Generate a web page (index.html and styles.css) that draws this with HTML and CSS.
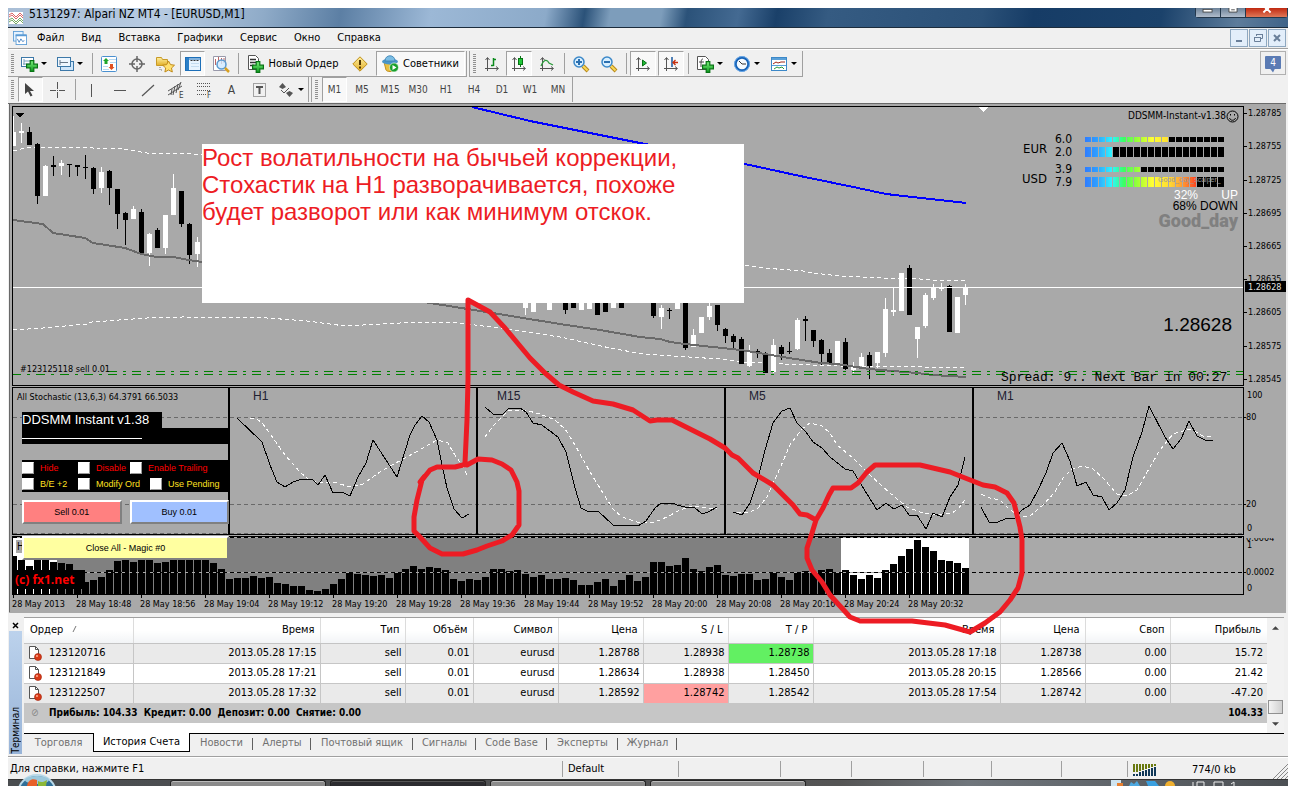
FILE: index.html
```html
<!DOCTYPE html>
<html lang="ru">
<head>
<meta charset="utf-8">
<title>5131297: Alpari NZ MT4 - [EURUSD,M1]</title>
<link rel="stylesheet" href="styles.css">
</head>
<body>
<svg class="defs" aria-hidden="true">
  <defs>
    <linearGradient id="gold" x1="0" y1="0" x2="0" y2="1"><stop offset="0" stop-color="#fff0a0"/><stop offset="1" stop-color="#e2ae28"/></linearGradient>
    <linearGradient id="green" x1="0" y1="0" x2="0" y2="1"><stop offset="0" stop-color="#7cf07c"/><stop offset="1" stop-color="#0b9a1c"/></linearGradient>
    <linearGradient id="heat" gradientUnits="userSpaceOnUse" x1="1085" y1="0" x2="1197" y2="0">
      <stop offset="0" stop-color="#2f7dff"/><stop offset=".1" stop-color="#2f9cff"/><stop offset=".24" stop-color="#2ff5ff"/><stop offset=".35" stop-color="#3cff60"/><stop offset=".48" stop-color="#a4ff33"/><stop offset=".6" stop-color="#ffff33"/><stop offset=".75" stop-color="#ffdd33"/><stop offset=".87" stop-color="#ff9a33"/><stop offset="1" stop-color="#ff4020"/>
    </linearGradient>
    <clipPath id="inside"><rect x="13" y="107" width="1230" height="488"/></clipPath>
    <symbol id="plus" viewBox="0 0 10 10"><path d="M3.5.5h3v3h3v3h-3v3h-3v-3h-3v-3h3z" fill="url(#green)" stroke="#087314"/></symbol>
    <symbol id="axes" viewBox="0 0 16 16"><path d="M3.500 15V2M1.500 4l2-2.500 2 2.500M1 12.500h13M12 10.500l2.500 2-2.500 2" fill="none" stroke="#555"/></symbol>
    <symbol id="doc" viewBox="0 0 16 16"><path d="M2.500 1.500h6l3 3v9h-9z" fill="#fff" stroke="#555"/><path d="M8.500 1.500v3h3" fill="none" stroke="#555"/><circle cx="11" cy="12" r="3.500" fill="#d83a18" stroke="#a02008" stroke-width=".6"/><circle cx="10" cy="11" r="1" fill="#ffb090"/></symbol>
  </defs>
</svg>

<div class="app">
  <header class="titlebar">
    <svg class="app-icon" viewBox="0 0 14 12"><rect width="14" height="12" fill="#fff"/><path d="M0 3l3-2 4 4 4-4 3 3M0 5l3-2 4 4 4-4 3 3" fill="none" stroke="#d66"/><path d="M0 8l3-2 4 4 4-4 3 3M0 10l3-2 4 4 4-4 3 3" fill="none" stroke="#7a6"/></svg>
    <h1>5131297: Alpari NZ MT4 - [EURUSD,M1]</h1>
    <div class="window-buttons">
      <button aria-label="Свернуть"><svg viewBox="0 0 14 10"><rect x="1.500" y="1.500" width="10" height="3" fill="#fff" stroke="#444"/></svg></button>
      <button aria-label="Развернуть"><svg viewBox="0 0 14 10"><path d="M2.500 0v4.500h9V0" fill="#fff" stroke="#444"/><path d="M5 2h4" stroke="#444"/></svg></button>
      <button class="close" aria-label="Закрыть"><svg viewBox="0 0 14 10"><path d="M3 5l4-4 4 4M5 0l2 2 2-2" fill="none" stroke="#fff" stroke-width="2"/></svg></button>
    </div>
  </header>

  <nav class="menubar">
    <svg class="menu-icon" viewBox="0 0 16 16"><rect x=".5" y=".5" width="11" height="11" fill="#e4f2ff" stroke="#5b9bd5"/><rect x="3.500" y="4.500" width="12" height="11" fill="#fff" stroke="#5b9bd5"/><path d="M3 5h12" stroke="#5b9bd5" stroke-width="2"/><path d="M5 9l2 4 2-4 2 3 2-1" fill="none" stroke="#3a7ac0"/></svg>
    <button>Файл</button><button>Вид</button><button>Вставка</button><button>Графики</button><button>Сервис</button><button>Окно</button><button>Справка</button>
    <div class="mdi">
      <button aria-label="Свернуть окно"><svg viewBox="0 0 16 16"><path d="M5 11h6" stroke="#6a7f99" stroke-width="2"/></svg></button>
      <button aria-label="Восстановить окно"><svg viewBox="0 0 16 16"><path d="M6.500 6V4.500h6v4H11M4.500 7.500h6v4h-6zM6 4.500h7M4 7.500h7" fill="none" stroke="#6a7f99"/></svg></button>
      <button aria-label="Закрыть окно"><svg viewBox="0 0 16 16"><path d="M5 5l6 6M11 5l-6 6" stroke="#6a7f99" stroke-width="2"/></svg></button>
    </div>
  </nav>

  <div class="toolbars">
    <div class="toolbar-row first">
      <div class="toolbar standard">
        <i class="grip"></i>
        <button class="drop" aria-label="Новый график"><svg viewBox="0 0 16 16"><rect x=".5" y="1.500" width="12" height="9" fill="#fff" stroke="#3c78a8"/><path d="M3 3v6M2 8h8M3 5h8" stroke="#78a0c0"/><use href="#plus" x="5" y="4" width="12" height="12"/></svg></button>
        <button class="drop" aria-label="Профили"><svg viewBox="0 0 16 16"><rect x="3.500" y="5.500" width="13" height="9" fill="#cfe6fa" stroke="#3c78a8"/><rect x=".5" y="1.500" width="13" height="9" fill="#eef7ff" stroke="#3c78a8"/><path d="M3 4v5M3 6.500h8" stroke="#678"/></svg></button>
        <i class="sep"></i>
        <button aria-label="Обзор рынка"><svg viewBox="0 0 16 16"><rect x=".5" y=".5" width="15" height="15" rx="1" fill="#fff" stroke="#4a90d0"/><path d="M8 3.500h7M9 6.500h6M2 10.500h5M2 13.500h6" stroke="#b8d8f0"/><path d="M5 2l3 3H6.500v3h-3V5H2z" fill="#1fa52c"/><path d="M10.500 14l3-3H12V8H9v3H7.500z" fill="#e05020"/></svg></button>
        <button aria-label="Окно данных"><svg viewBox="0 0 16 16"><circle cx="8" cy="8" r="5" fill="none" stroke="#666" stroke-width="1.500"/><path d="M8 0v6M8 10v6M0 8h6M10 8h6" stroke="#666" stroke-width="1.500"/></svg></button>
        <button aria-label="Навигатор"><svg viewBox="0 0 16 16"><path d="M-.5 1.500h5l1 2h5v6h-11z" fill="url(#gold)" stroke="#c89a28"/><path d="M3 11v3h3" stroke="#777" fill="none" stroke-dasharray="1 1"/><path d="M11.500 5l2 3.600 4 .6-3 2.800.8 4-3.800-2-3.600 2 .8-4-3-2.800 4-.6z" fill="#ffe070" stroke="#c08a18"/></svg></button>
        <button class="on" aria-label="Терминал"><svg viewBox="0 0 16 16"><rect x=".5" y="1.500" width="15" height="13" fill="#e8f4ff" stroke="#1d6fb8"/><path d="M1 3h14" stroke="#1d6fb8"/><rect x="1" y="2" width="3" height="12" fill="#2c80c8"/><path d="M5.500 4.500h9" stroke="#333" stroke-dasharray="2 1"/><path d="M6 7.500h8M6 10.500h8" stroke="#c4dcf0"/></svg></button>
        <button aria-label="Тестер стратегий"><svg viewBox="0 0 16 16"><path d="M.5.500h12v14H.5z" fill="#fff" stroke="#99a"/><path d="M2.500 3v6M5.500 1v5M8.500 2v6M11 2v5" stroke="#b66"/><circle cx="8.500" cy="8.500" r="4.500" fill="#cfe9ff" fill-opacity=".8" stroke="#5a9ad0" stroke-width="1.500"/><path d="M12 12l4 4" stroke="#d8a020" stroke-width="2.500"/></svg></button>
        <i class="sep"></i>
        <button class="wide"><svg viewBox="0 0 17 18"><path d="M1.500.5h7l3 3v11h-10z" fill="#fff" stroke="#555"/><path d="M3 4.500h6M3 7.500h6M3 10.500h4" stroke="#333" stroke-width="1.500"/><use href="#plus" x="5" y="6" width="12" height="12"/></svg>Новый Ордер</button>
        <button aria-label="MetaEditor"><svg viewBox="0 0 16 16"><path d="M8 .8L15.200 8 8 15.200.8 8z" fill="url(#gold)" stroke="#c0901a"/><path d="M8 4v5M8 10.500v2" stroke="#543800" stroke-width="2"/></svg></button>
        <button class="wide on"><svg viewBox="0 0 17 18"><path d="M2 7l2 8c1 2 7 2 8 0l2-8z" fill="#eac040" stroke="#c09020"/><ellipse cx="8" cy="6.500" rx="8" ry="3" fill="#4b96c8"/><path d="M3 6c0-7 10-7 10 0z" fill="#7bbde4" stroke="#3a80b0" stroke-width=".8"/><circle cx="12" cy="12.500" r="4.500" fill="#19a02c" stroke="#fff" stroke-width=".6"/><path d="M10.500 10v5l4-2.500z" fill="#fff"/></svg>Советники</button>
      </div>
      <div class="toolbar charts">
        <i class="grip"></i>
        <button aria-label="Бары"><svg viewBox="0 0 16 16"><use href="#axes"/><path d="M9.500 2v8M7 9.500h2.500M9.500 3.500H12" stroke="#0b8a1c" stroke-width="1.500"/></svg></button>
        <button class="on" aria-label="Свечи"><svg viewBox="0 0 16 16"><use href="#axes"/><path d="M9.500 0v11" stroke="#087314"/><rect x="7.500" y="2.500" width="4" height="6" fill="#20c838" stroke="#087314"/></svg></button>
        <button aria-label="Линия"><svg viewBox="0 0 16 16"><use href="#axes"/><path d="M2 10c3-7 6-7 8-3l4 2" fill="none" stroke="#2a9a3a" stroke-width="1.300"/></svg></button>
        <i class="sep"></i>
        <button aria-label="Увеличить"><svg viewBox="0 0 16 16"><path d="M10 10l5 5" stroke="#b88818" stroke-width="4"/><path d="M10 10l4.500 4.500" stroke="#f8d858" stroke-width="2"/><circle cx="6" cy="6" r="5" fill="#d8efff" stroke="#3c88c8" stroke-width="1.500"/><path d="M6 3v6M3 6h6" stroke="#2c70b0" stroke-width="2"/></svg></button>
        <button aria-label="Уменьшить"><svg viewBox="0 0 16 16"><path d="M10 10l5 5" stroke="#b88818" stroke-width="4"/><path d="M10 10l4.500 4.500" stroke="#f8d858" stroke-width="2"/><circle cx="6" cy="6" r="5" fill="#d8efff" stroke="#3c88c8" stroke-width="1.500"/><path d="M3 6h6" stroke="#2c70b0" stroke-width="2"/></svg></button>
        <i class="sep"></i>
        <button class="on" aria-label="Автопрокрутка"><svg viewBox="0 0 16 16"><use href="#axes"/><path d="M7.500 4v6l4-3z" fill="#20b838" stroke="#087314"/></svg></button>
        <button class="on" aria-label="Сдвиг графика"><svg viewBox="0 0 16 16"><use href="#axes"/><path d="M9 1v10" stroke="#1858a0" stroke-width="1.500"/><path d="M10 6.500h5M12.500 4l-2.500 2.500 2.500 2.500" fill="none" stroke="#c83010" stroke-width="1.300"/></svg></button>
        <i class="sep"></i>
        <button class="drop" aria-label="Индикаторы"><svg viewBox="0 0 16 16"><path d="M.5.500h8l3 3v10H.5z" fill="#fff" stroke="#555"/><path d="M6 3c-2 0-2 2-2 8M2 6h5M5 11h3" stroke="#444" fill="none"/><use href="#plus" x="5" y="5" width="12" height="12"/></svg></button>
        <button class="drop" aria-label="Периоды"><svg viewBox="0 0 16 16"><circle cx="8" cy="8" r="6.500" fill="#f4faff" stroke="#1763b8" stroke-width="2.500"/><circle cx="8" cy="8" r="7.500" fill="none" stroke="#68a8e8"/><path d="M8 8L5 5M8 8h4" stroke="#333"/></svg></button>
        <button class="drop" aria-label="Шаблоны"><svg viewBox="0 0 16 16"><rect x=".5" y="1.500" width="15" height="13" fill="#fff" stroke="#3c88c8"/><path d="M1 3h14" stroke="#5aa0d8" stroke-width="2"/><path d="M2 8l3-2 2 1 3-1h4" fill="none" stroke="#a02818"/><path d="M1 9.500h14" stroke="#5aa0d8"/><path d="M3 13l3-2 2 1 3-1 2 2" fill="none" stroke="#2a9a3a"/></svg></button>
      </div>
      <button class="news" aria-label="Сообщения"><span>4</span></button>
    </div>

    <div class="toolbar-row">
      <div class="toolbar drawing">
        <i class="grip"></i>
        <button class="on" aria-label="Курсор"><svg viewBox="0 0 16 16"><path d="M2 1v11l3-2.500 2.500 5 2-1L7 9h4z" fill="#444"/></svg></button>
        <button aria-label="Перекрестие"><svg viewBox="0 0 16 16"><path d="M7.500 0v7M7.500 10v6M0 8.500h6M9 8.500h6M7 8.500h1" stroke="#555"/></svg></button>
        <i class="sep"></i>
        <button aria-label="Вертикальная линия"><svg viewBox="0 0 16 16"><path d="M7.500 2v13" stroke="#555"/></svg></button>
        <button aria-label="Горизонтальная линия"><svg viewBox="0 0 16 16"><path d="M2 8.500h12" stroke="#555"/></svg></button>
        <button aria-label="Трендовая линия"><svg viewBox="0 0 16 16"><path d="M2 14L14 3" stroke="#555" stroke-width="1.200"/></svg></button>
        <button aria-label="Канал"><svg viewBox="0 0 16 16"><path d="M0 13L14 4M0 9L13 1M4 7l-1 6M7 4L5 13M10 2L8 11M13 0l-3 8" stroke="#555" fill="none"/><text x="11" y="16">E</text></svg></button>
        <button aria-label="Фибоначчи"><svg viewBox="0 0 16 16"><path d="M1 1.500h14M1 4.500h14M1 8.500h14M1 12.500h9" stroke="#555" stroke-dasharray="1 1"/><text x="11" y="16">F</text></svg></button>
        <button class="glyph">A</button>
        <button aria-label="Метка"><svg viewBox="0 0 16 16"><rect x="1.500" y="1.500" width="12" height="13" fill="none" stroke="#555" stroke-dasharray="1 1"/><path d="M4 5h7M7.500 5v7" stroke="#555" stroke-width="2"/></svg></button>
        <button class="drop" aria-label="Стрелки"><svg viewBox="0 0 16 16"><path d="M4.500 1L8 5l-3.500 2L1 5zM11.500 9L15 11l-3.500 4L8 11z" fill="#555"/><path d="M3 8l3 3 5-5" fill="none" stroke="#555"/></svg></button>
      </div>
      <div class="toolbar periods">
        <i class="grip"></i>
        <button class="on">M1</button><button>M5</button><button>M15</button><button>M30</button><button>H1</button><button>H4</button><button>D1</button><button>W1</button><button>MN</button>
      </div>
    </div>
  </div>

  <main class="chart">
    <svg class="plot" viewBox="8 102 1280 511" role="img" aria-label="EURUSD,M1">
      <rect x="8" y="102" width="1280" height="511" fill="#f0f0f0"/>
      <rect x="9" y="103" width="1277" height="510" fill="#a9a9a9"/>
      <path d="M8 103.500h1278M9.500 103v509" stroke="#696969" fill="none"/>

      <g class="crisp">
        <path d="M472 107L530 121 600 135 650 145 745 164 800 176 858 188 886 194 966 203" stroke="#00f" stroke-width="2"/>
        <path class="dash" d="M13 151L25 148 66 147 88 147 93 148 123 149 147 153 183 153 202 155M745 265L763 268 803 271 813 273 840 276 883 278 907 278 933 280 966 280"/>
        <path class="dash" d="M13 330L43 328 87 324 92 322 147 318 183 317 267 318 307 321 345 326 400 323 450 322 500 328 560 337 610 348 643 354 673 356 720 359 743 362 783 364 837 366 923 367 950 367 966 368"/>
        <g clip-path="url(#inside)">
        <path class="candle-w" d="M13.500 132V146M21.500 131V133M45.500 166V196M61.500 163V166M101.500 172V188M133.500 209V219M149.500 234V253M165.500 215V248M173.500 188V215M197.500 242V254M525.500 303V308M533.500 303V312M549.500 303V310M581.500 303V310M589.500 303V309M613.500 303V308M661.500 308V317M677.500 300V309M693.500 335V347M701.500 317V333M709.500 306V317M749.500 352V366M773.500 345V372M797.500 320V349M837.500 341V364M853.500 366V370M861.500 357V366M877.500 352V363M885.500 309V353M893.500 310V312M901.500 273V311M917.500 327V339M925.500 295V326M933.500 287V298M941.500 288V289M957.500 297V333M965.500 287V295"/>
        <path class="wick-w" d="M13.500 116V132M21.500 123V143M45.500 165V196M61.500 160V175M101.500 167V193M133.500 206V219M149.500 233V266M165.500 215V254M173.500 174V215M197.500 237V267M525.500 303V315M661.500 305V329M693.500 329V347M709.500 303V320M749.500 345V367M773.500 339V373M797.500 318V350M853.500 362V373M861.500 353V366M877.500 352V368M885.500 298V357M893.500 288V316M917.500 327V358M925.500 293V328M933.500 284V300M941.500 283V291M965.500 284V305"/>
        <path class="candle-b" d="M29.500 132V145M37.500 144V196M53.500 165V167M69.500 164V165M77.500 165V167M85.500 167V168M93.500 168V189M109.500 171V188M117.500 189V214M125.500 213V220M141.500 212V253M157.500 230V248M181.500 191V224M189.500 224V255M565.500 303V310M573.500 303V308M597.500 303V315M605.500 303V312M621.500 303V308M653.500 303V316M669.500 310V311M685.500 303V348M717.500 305V325M725.500 329V336M733.500 336V342M741.500 339V364M757.500 351V352M765.500 353V373M781.500 347V354M789.500 351V352M805.500 319V321M813.500 330V341M821.500 340V354M829.500 353V363M845.500 342V369M869.500 355V366M909.500 268V315M949.500 286V332"/>
        <path class="wick-b" d="M29.500 127V145M37.500 143V204M53.500 156V176M69.500 164V177M77.500 165V176M85.500 155V179M93.500 167V194M109.500 170V205M117.500 189V229M125.500 212V245M141.500 209V253M157.500 228V248M181.500 191V227M189.500 223V264M565.500 303V314M653.500 303V318M669.500 308V319M685.500 303V350M717.500 305V331M725.500 328V343M733.500 334V348M741.500 337V364M757.500 349V358M765.500 352V373M781.500 345V360M789.500 342V354M805.500 316V341M813.500 330V347M821.500 339V365M829.500 349V364M845.500 338V370M869.500 352V379M909.500 265V315M949.500 285V332"/>
        </g>
        <path class="ma" d="M13 220L43 224 53 233 85 238 93 243 125 248 141 254 157 257 173 257 189 260 202 262 430 303 480 311 560 324 600 330 640 337 660 339 670 342 685 344 741 350 765 354 789 358 821 363 837 364 869 369 893 371 917 373 933 375 966 377"/>
        <path d="M13 287.500H1243" stroke="#fff"/>
        <path d="M108 371.500H1243M12 374.500H1243" stroke="#008000" stroke-dasharray="9 6 3 6"/>
        <path d="M12.500 106.500H1243.500V385.500H12.500zM12.500 387.500H1243.500V534.500H12.500z" stroke="#000"/>
        <path d="M15 113h9l-4 4z" fill="#000"/><path d="M979 107h9l-4.500 5z" fill="#fff"/>
        <path d="M1244 113.500h3M1244 146.500h3M1244 180.500h3M1244 213.500h3M1244 246.500h3M1244 279.500h3M1244 312.500h3M1244 346.500h3M1244 379.500h3" stroke="#000"/>
        <path class="level" d="M13 417.500H1243M13 504.500H1243M13 533.500H1243"/>
        <path d="M229 388V534M477 388V534M725 388V534M973 388V534" stroke="#000" stroke-width="2"/>
        <path class="dash" d="M250 418L257 419 263 424 273 438 285 455 300 472 308 479 317 482 337 483 350 487 363 484 380 472 392 465 407 457 423 448 437 440 448 443 453 452 462 465 468 477M485 437L493 426 502 417 508 411 525 410 540 414 555 420 565 429 575 445 590 472 603 493 613 509 622 517 637 522 648 523 655 522 667 517 680 510 692 506 707 508 717 509M737 513L750 512 758 508 767 497 777 475 790 445 802 429 810 423 822 426 830 433 837 445 853 458 870 475 890 493 907 507 923 513 940 515 952 513 958 509 965 500M981 494L990 498 1000 500 1010 510 1022 517 1030 516 1043 505 1055 492 1063 478 1072 469 1083 466 1093 469 1103 478 1117 494 1127 496 1137 490 1150 467 1160 450 1173 434 1190 429 1203 436 1213 437"/>
        <path class="main" d="M237 418L262 442 270 465 277 482 285 487 293 482 302 479 312 479 318 485 325 475 333 493 342 492 350 496 358 477 366 463 373 440 397 477 410 435 415 425 422 416 429 422 437 440 442 465 447 488 454 509 462 518 469 514M485 407L493 414 502 415 509 408 520 408 526 412 533 423 542 425 550 431 558 437 566 452 575 488 581 508 589 512 598 511 613 525 638 526 646 521 655 508 661 503 673 503 677 505 685 507 694 507 702 514 708 512 717 507M733 512L742 515 750 503 757 482 765 450 773 423 782 411 790 408 797 423 806 432 813 442 822 448 830 457 845 469 853 471 862 486 877 510 886 503 894 509 902 505 909 515 917 515 926 529 933 513 942 517 950 497 958 485 965 457M981 507L989 522 998 522 1005 519 1015 518 1022 510 1030 505 1038 490 1046 473 1053 453 1062 443 1070 461 1077 486 1086 482 1093 495 1102 497 1109 510 1117 503 1125 490 1133 457 1142 432 1149 406 1165 437 1173 449 1181 439 1189 421 1197 436 1205 440 1213 440"/>
        <path d="M13 537H841V594H13z" fill="#808080"/><path d="M13 537H57V594H13zM841 537H969V594H841z" fill="#fff"/>
        <g clip-path="url(#inside)">
        <path class="bars" d="M13.500 594V556M21.500 594V560M29.500 594V566M37.500 594V560M45.500 594V560M53.500 594V562M61.500 594V563M69.500 594V564M77.500 594V570M85.500 594V582M93.500 594V580M101.500 594V577M109.500 594V570M117.500 594V561M125.500 594V560M133.500 594V562M141.500 594V560M149.500 594V560M157.500 594V563M165.500 594V562M173.500 594V560M181.500 594V560M189.500 594V560M197.500 594V560M205.500 594V560M213.500 594V563M221.500 594V569M229.500 594V579M237.500 594V578M245.500 594V578M253.500 594V576M261.500 594V578M269.500 594V577M277.500 594V583M285.500 594V584M293.500 594V586M301.500 594V586M309.500 594V590M317.500 594V591M325.500 594V589M333.500 594V584M341.500 594V579M349.500 594V573M357.500 594V574M365.500 594V575M373.500 594V576M381.500 594V575M389.500 594V578M397.500 594V573M405.500 594V569M413.500 594V566M421.500 594V569M429.500 594V567M437.500 594V568M445.500 594V570M453.500 594V579M461.500 594V581M469.500 594V579M477.500 594V580M485.500 594V577M493.500 594V569M501.500 594V569M509.500 594V571M517.500 594V570M525.500 594V574M533.500 594V577M541.500 594V575M549.500 594V579M557.500 594V579M565.500 594V578M573.500 594V580M581.500 594V585M589.500 594V585M597.500 594V582M605.500 594V579M613.500 594V586M621.500 594V580M629.500 594V575M637.500 594V581M645.500 594V577M653.500 594V562M661.500 594V562M669.500 594V566M677.500 594V565M685.500 594V558M693.500 594V569M701.500 594V571M709.500 594V567M717.500 594V565M725.500 594V575M733.500 594V576M741.500 594V574M749.500 594V574M757.500 594V580M765.500 594V579M773.500 594V573M781.500 594V577M789.500 594V580M797.500 594V573M805.500 594V571M813.500 594V572M821.500 594V570M829.500 594V569M837.500 594V573M845.500 594V570M853.500 594V575M861.500 594V579M869.500 594V575M877.500 594V578M885.500 594V570M893.500 594V564M901.500 594V556M909.500 594V549M917.500 594V540M925.500 594V547M933.500 594V551M941.500 594V560M949.500 594V561M957.500 594V563M965.500 594V568"/>
        </g>
        <path d="M13 572.500H1243M13 537.500H1243" stroke="#a9a9a9"/>
        <path d="M13 572.500H1243M13 537.500H1243" stroke="#000" stroke-dasharray="4 3"/>
        <path d="M12.500 536.500H1243.500V594.500H12.500z" stroke="#000"/>
        <path d="M13.500 595v3M77.500 595v3M141.500 595v3M205.500 595v3M269.500 595v3M333.500 595v3M397.500 595v3M461.500 595v3M525.500 595v3M589.500 595v3M653.500 595v3M717.500 595v3M781.500 595v3M845.500 595v3M909.500 595v3M1244 417.500h2M1244 504.500h2M1244 572.500h2" stroke="#000"/>
        <g stroke="#000" stroke-dasharray="6 1">
          <path d="M1085 139.500H1225M1085 169.500H1225" stroke-width="5"/><path d="M1085 152H1225M1085 182H1225" stroke-width="10"/>
        </g>
        <g stroke="url(#heat)" stroke-dasharray="6 1">
          <path d="M1085 139.500H1169M1085 169.500H1141" stroke-width="5"/><path d="M1085 152H1113M1085 182H1197" stroke-width="10"/>
        </g>
      </g>

      <g class="axis">
        <text x="1248" y="116">1.28785</text><text x="1248" y="149">1.28755</text><text x="1248" y="183">1.28725</text><text x="1248" y="216">1.28695</text><text x="1248" y="249">1.28665</text><text x="1248" y="282">1.28635</text>
        <rect x="1245" y="281" width="41" height="11"/>
        <text class="now" x="1248" y="290">1.28628</text><text x="1248" y="315">1.28605</text><text x="1248" y="349">1.28575</text><text x="1248" y="382">1.28545</text>
        <text x="1247" y="398">100</text><text x="1246" y="420">80</text><text x="1246" y="507">20</text><text x="1247" y="531">0</text><text x="1247" y="548">1</text><text x="1246" y="541" clip-path="inset(5px 0 0 0)">0.0004</text><text x="1246" y="575">0.0002</text><text x="1247" y="591">0</text>
        <text x="12" y="607">28 May 2013</text><text x="76" y="607">28 May 18:48</text><text x="140" y="607">28 May 18:56</text><text x="204" y="607">28 May 19:04</text><text x="268" y="607">28 May 19:12</text><text x="332" y="607">28 May 19:20</text><text x="396" y="607">28 May 19:28</text><text x="460" y="607">28 May 19:36</text><text x="524" y="607">28 May 19:44</text><text x="588" y="607">28 May 19:52</text><text x="652" y="607">28 May 20:00</text><text x="716" y="607">28 May 20:08</text><text x="780" y="607">28 May 20:16</text><text x="844" y="607">28 May 20:24</text><text x="908" y="607">28 May 20:32</text>
        <text x="17" y="400">All Stochastic (13,6,3) 64.3791 66.5033</text>
        <text x="20" y="372">#123125118 sell 0.01</text>
      </g>
      <text class="expert" x="1226" y="119" text-anchor="end">DDSMM-Instant-v1.38</text>
      <g fill="none" stroke="#000"><circle cx="1232.500" cy="116.500" r="5.500"/><path d="M1229.500 118c1 3 5 3 6 0M1230.500 114v1.500M1234.500 114v1.500"/></g>
      <g class="meter"><text x="1023" y="153">EUR</text><text x="1022" y="183">USD</text></g>
      <g class="meter-num"><text x="1055" y="143">6.0</text><text x="1055" y="156">2.0</text><text x="1055" y="173">3.9</text><text x="1055" y="186">7.9</text></g>
      <text class="tiny" x="1158" y="182">Good_day_scalper_</text>
      <g class="votes"><text x="1174" y="199" fill="#fff">32%</text><text x="1238" y="199" fill="#fff" text-anchor="end">UP</text><text x="1238" y="210" text-anchor="end">68% DOWN</text></g>
      <text class="brand" x="1238" y="227" text-anchor="end">Good_day</text>
      <text class="quote" x="1232" y="331" text-anchor="end">1.28628</text>
      <text class="spread" x="1001" y="381">Spread: 9.. Next Bar in 00:27</text>
      <g class="frames"><text x="253" y="400">H1</text><text x="497" y="400">M15</text><text x="749" y="400">M5</text><text x="997" y="400">M1</text></g>
    </svg>

    <section class="expert-panel">
      <h2>DDSMM Instant v1.38</h2>
      <div class="rule"></div>
      <div class="options">
        <div class="hot"><label class="a"><input type="checkbox">Hide</label><label class="b"><input type="checkbox">Disable</label><label><input type="checkbox">Enable Trailing</label></div>
        <div class="warm"><label class="a"><input type="checkbox">B/E +2</label><label class="c"><input type="checkbox">Modify Ord</label><label><input type="checkbox">Use Pending</label></div>
      </div>
      <div class="trade"><button class="sell">Sell 0.01</button><button class="buy">Buy 0.01</button></div>
      <button class="close-all">Close All - Magic #0</button>
    </section>
    <span class="hist-tag">H</span>
    <span class="copyright">(c) fx1.net</span>
    <p class="note">Рост волатильности на бычьей коррекции,<br>Стохастик на H1 разворачивается, похоже<br>будет разворот или как минимум отскок.</p>
  </main>

  <section class="terminal">
    <aside class="side"><button aria-label="Закрыть"><svg viewBox="0 0 7 7"><path d="M1 1l5 5M6 1L1 6" stroke="#000" stroke-width="1.500"/></svg></button><div class="caption"><span>Терминал</span></div></aside>
    <div class="pane">
      <div class="grid-wrap">
        <table>
          <colgroup><col class="w-order"><col class="w-time"><col class="w-std"><col class="w-vol"><col class="w-std"><col class="w-std"><col class="w-std"><col class="w-std"><col class="w-time"><col class="w-std"><col class="w-std"><col class="w-last"></colgroup>
          <thead><tr><th>Ордер <svg class="sort" viewBox="0 0 6 8"><path d="M1 7l3-6" stroke="#777"/></svg></th><th>Время</th><th>Тип</th><th>Объём</th><th>Символ</th><th>Цена</th><th>S / L</th><th>T / P</th><th>Время</th><th>Цена</th><th>Своп</th><th>Прибыль</th></tr></thead>
          <tbody>
            <tr><td><svg><use href="#doc"/></svg>123120716</td><td>2013.05.28 17:15</td><td>sell</td><td>0.01</td><td>eurusd</td><td>1.28788</td><td>1.28938</td><td class="tp">1.28738</td><td>2013.05.28 17:18</td><td>1.28738</td><td>0.00</td><td>15.72</td></tr>
            <tr><td><svg><use href="#doc"/></svg>123121849</td><td>2013.05.28 17:21</td><td>sell</td><td>0.01</td><td>eurusd</td><td>1.28634</td><td>1.28938</td><td>1.28450</td><td>2013.05.28 20:15</td><td>1.28566</td><td>0.00</td><td>21.42</td></tr>
            <tr><td><svg><use href="#doc"/></svg>123122507</td><td>2013.05.28 17:32</td><td>sell</td><td>0.01</td><td>eurusd</td><td>1.28592</td><td class="sl">1.28742</td><td>1.28542</td><td>2013.05.28 17:54</td><td>1.28742</td><td>0.00</td><td>-47.20</td></tr>
          </tbody>
          <tfoot><tr><td colspan="11"><i>⊘</i>Прибыль: 104.33&nbsp; Кредит: 0.00&nbsp; Депозит: 0.00&nbsp; Снятие: 0.00</td><td>104.33</td></tr></tfoot>
        </table>
        <div class="scroll"><svg viewBox="0 0 8 4"><path d="M0 4l4-4 4 4z"/></svg><span class="thumb"></span><svg viewBox="0 0 8 4"><path d="M0 0l4 4 4-4z"/></svg></div>
      </div>
      <div class="tabs">
        <button>Торговля</button><button class="active">История Счета</button><button>Новости</button><button>Алерты</button><button>Почтовый ящик</button><button>Сигналы</button><button>Code Base</button><button>Эксперты</button><button>Журнал</button>
      </div>
    </div>
  </section>

  <footer class="status">
    <span>Для справки, нажмите F1</span><span>Default</span><span></span><span></span><span></span><span></span><span></span><span></span>
    <span class="traffic"><svg viewBox="0 0 24 12"><path d="M1 0v8M4 0v8M7 0v7M10 0v6M13 0v5M16 0v4M19 0v3M22 0v2" stroke="#6a7a10" stroke-width="2"/><path d="M1 10v2M4 10v2M7 8v4M10 7v5M13 6v6M16 5v7M19 4v8M22 3v9" stroke="#103858" stroke-width="2"/></svg>774/0 kb</span>
    <svg class="resize" viewBox="0 0 16 16"><path d="M1 16L16 1M5 16L16 5M9 16L16 9M13 16l3-3" stroke="#888"/></svg>
  </footer>
  <div class="taskbar">
    <span class="task"></span><span class="task current"></span><span class="task"></span><span class="task"></span>
    <svg class="tray" viewBox="0 0 130 6"><rect width="10" height="6" fill="#cfe4f0"/><rect x="6" y="3" width="6" height="3" fill="#e88030"/><path d="M18 6l2-4 3 2 3-3 3 5z" fill="#4da8e0"/><path d="M35 1h9l4 5H37z" fill="#3aa0e0"/><circle cx="59" cy="6" r="5" fill="#f0b030"/><path d="M82 6V2M86 6V2h7v4M103 6V2h9v4M120 4l3-2v4" fill="none" stroke="#eee"/></svg>
  </div>
  <svg class="orb" viewBox="0 0 40 12"><circle cx="20" cy="20" r="19" fill="#2f6f98" stroke="#b8d8e8" stroke-width="2"/><ellipse cx="20" cy="6" rx="12" ry="4" fill="#9cc8dc"/><path d="M10 12c1-6 5-8 10-6v6z" fill="#e86028"/><path d="M21 12V7c3 2 6 1 9-1l-1 6z" fill="#8cb838"/></svg>

  <svg class="pen" viewBox="8 8 1280 778" aria-hidden="true">
    <path d="M465 463L467 420 468 380V300L490 312 505 328 530 358 545 373 559 385 573 392 593 401 613 404 633 410 650 421 657 420H672L690 429 710 439 725 448 732 455 738 458 753 473 773 485 793 505 800 514 807 515 816 520 823 508 829 495 833 488H851L858 483 867 472 875 465H920L950 472 960 476 983 485 995 487 1007 493 1014 503 1020 527 1022 540V573L1018 588 1010 600 1000 612 985 623 970 632 945 625 912 621H860L850 617 830 595 822 582 812 570 807 558V548L812 533 816 520"/>
    <path d="M467 465L478 459 492 460 502 464 511 470 517 482 519 491V525L512 535 502 541 487 546 477 550 463 554H442L430 548 420 537 414 531V517L417 500 422 480 430 470 437 467 455 467 467 464"/>
    <path d="M420 482L424 477"/>
  </svg>
</div>
</body>
</html>
```

FILE: styles.css
```css
* { box-sizing: border-box; }

body {
  margin: 8px 8px 0;
  background: #fff;
  color: #000;
  font: 11px/14px "DejaVu Sans Condensed", "DejaVu Sans", sans-serif;
}

button {
  margin: 0;
  padding: 0;
  border: 0;
  background: none;
  color: inherit;
  font: inherit;
}

.defs { position: absolute; width: 0; height: 0; }

.app { position: relative; background: #f0f0f0; overflow: hidden; }

/* Title */
.titlebar {
  display: flex;
  align-items: center;
  gap: 6px;
  height: 20px;
  padding-left: 1px;
  border-bottom: 1px solid #1c2c3c;
  background: linear-gradient(100deg, #a9bed6 0, #b7cbe2 12%, #8fabc8 20%, #5c7fa4 26%, #9cb8d6 33%, #8caac9 42%, #2b5279 45%, #7d9dbb 47%, #7d9dbb 51%, #2b5279 53%, #446a92 57%, #1a4069 60%, #355b82 64%, #2b5178 76%, #163c66 80%, #1b426b 90%, #5d7c9b 96%, #3f6388 100%);
}
.titlebar h1 { flex: 1; align-self: flex-start; margin: 0; font-size: 12px; font-weight: 400; line-height: 12px; }
.app-icon { width: 14px; height: 12px; }
.window-buttons { display: flex; align-self: flex-start; height: 10px; border: 1px solid #24384c; border-top: 0; border-radius: 0 0 4px 4px; }
.window-buttons button { width: 25px; border-right: 1px solid #24384c; background: linear-gradient(#6c8299, #b0bccb); line-height: 0; }
.window-buttons .close { width: 41px; border: 0; background: linear-gradient(#c02810, #e07858); }
.window-buttons svg { width: 14px; height: 9px; }

/* Menu */
.menubar { display: flex; align-items: center; gap: 17px; height: 21px; padding-left: 5px; border-bottom: 1px solid #a0a0a0; }
.menu-icon { width: 14px; height: 14px; margin-right: -7px; }
.mdi { display: flex; gap: 1px; margin-left: auto; padding-right: 2px; }
.mdi button { width: 18px; height: 18px; border: 1px solid #8fa8c0; background: #e3eefa; line-height: 0; }
.mdi svg { width: 16px; height: 16px; }

/* Toolbars */
.toolbar-row { display: flex; gap: 2px; height: 25px; }
.toolbar-row.first { height: 28px; border-top: 1px solid #fff; padding-top: 1px; }
.toolbar { display: grid; align-items: stretch; border-right: 1px solid #a0a0a0; }
.first .toolbar { border-bottom: 1px solid #a0a0a0; }
.standard { grid-template-columns: 9px 34px 38px 6px 28px 28px 28px 27px 29px 6px 104px 30px 91px; }
.charts { grid-template-columns: 9px 26px 28px 28px 6px 28px 28px 6px 28px 28px 6px 37px 37px 37px; border-left: 1px solid #a0a0a0; }
.drawing { grid-template-columns: 9px 27px 28px 6px 28px 28px 28px 28px 28px 27px 29px 34px; }
.periods { grid-template-columns: 9px 27px repeat(8, 28px); border-left: 1px solid #a0a0a0; color: #444; font-size: 10px; }
.grip { margin: 3px 3px; background: repeating-linear-gradient(#909090 0 1px, transparent 1px 2px); }
.sep { width: 1px; margin: 2px auto; background: #a0a0a0; }
.toolbar button { display: flex; align-items: center; justify-content: center; margin: 0 1px; gap: 4px; white-space: nowrap; }
.toolbar svg { flex: none; width: 16px; height: 16px; overflow: visible; }
.toolbar svg text { fill: #444; font: 8px "DejaVu Sans Condensed", sans-serif; }
.toolbar .wide svg { width: 17px; height: 18px; }
.toolbar .on { border: 1px solid #a0a0a0; border-right-color: #fff; border-bottom-color: #fff; background: #f8f8f8; }
.toolbar .drop::after { content: ""; border: 3px solid transparent; border-top-color: #000; border-bottom: 0; }
.toolbar .glyph { color: #444; font-size: 12px; }
.news { width: 26px; height: 24px; margin-left: auto; margin-right: 2px; border: 1px solid #b0b0b0; }
.news span { display: block; width: 16px; height: 13px; margin: 2px auto 4px; border-radius: 1px; background: #5b7bb4; color: #fff; font-size: 10px; line-height: 13px; }
.news span::after { content: ""; display: block; width: 5px; height: 4px; margin-left: 5px; background: #5b7bb4; clip-path: polygon(0 0, 100% 0, 60% 100%); }

/* Chart */
.chart { position: relative; }
.plot { display: block; width: 100%; height: auto; }
.crisp { fill: none; shape-rendering: crispEdges; }
.dash { stroke: #fff; stroke-dasharray: 4 3; }
.main { stroke: #000; }
.level { stroke: #696969; stroke-dasharray: 4 3; }
.ma { stroke: #696969; stroke-width: 2; }
.candle-w { stroke: #fff; stroke-width: 5; }
.candle-b { stroke: #000; stroke-width: 5; }
.wick-w { stroke: #fff; }
.wick-b { stroke: #000; }
.bars { stroke: #000; stroke-width: 7; }
.axis { font-size: 9px; }
.axis .now { fill: #e0e0e0; }
.expert { font-size: 10px; }
.meter { font-size: 13px; }
.meter-num { font-size: 12px; }
.tiny { fill: #999; font: 7px "Liberation Sans", sans-serif; }
.votes { font: 12px "Liberation Sans", sans-serif; }
.brand { fill: #808080; font: 900 18px Roboto, sans-serif; }
.quote { font: 19px "Liberation Sans", sans-serif; }
.spread { font: 13px "Liberation Mono", monospace; }
.frames { fill: #202030; font: 12px "Liberation Sans", sans-serif; }

.note {
  position: absolute;
  top: 42px;
  left: 194px;
  width: 542px;
  height: 159px;
  margin: 0;
  background: #fff;
  color: #ed1c24;
  font: 24px/27px "Liberation Sans", sans-serif;
  white-space: nowrap;
}

.expert-panel { position: absolute; top: 310px; left: 14px; width: 207px; font: 9px/16px "Liberation Sans", sans-serif; }
.expert-panel h2 { width: 140px; margin: 0; background: #000; color: #fff; font-size: 13px; font-weight: 400; line-height: 16px; white-space: nowrap; }
.rule { height: 16px; margin-bottom: 16px; background: linear-gradient(#fff, #fff) 0 10px / 120px 1px no-repeat #000; }
.options { background: #000; }
.options div { display: flex; height: 16px; }
.options label { display: flex; align-items: center; gap: 6px; white-space: nowrap; }
.options input { appearance: none; width: 12px; height: 12px; margin: 0; border: 1px solid #fff; border-right-color: #999; border-bottom-color: #999; background: #fff; }
.hot { color: #f00; }
.warm { color: #ffe020; }
.options .a { width: 56px; }
.options .b { width: 52px; }
.options .c { width: 72px; }
.trade { display: flex; gap: 8px; margin: 8px 0 12px; }
.expert-panel button { flex: 1; height: 24px; border: 2px solid #fff; border-right-color: #808080; border-bottom-color: #808080; }
.expert-panel .sell { background: #ff8080; }
.expert-panel .buy { background: #a0c0ff; }
.expert-panel .close-all { display: block; width: 100%; background: #ffffa0; }
.hist-tag { position: absolute; z-index: -1; top: 438px; left: 8px; padding: 0 1px; background: #a9a9a9; font-size: 10px; line-height: 13px; }
.chart { z-index: 0; }
.chart .hist-tag { z-index: 0; }
.chart .expert-panel { z-index: 1; }
.copyright { position: absolute; top: 468px; left: 5px; width: 72px; padding-left: 2px; background: #000; color: #f00; font: bold 12px/19px "Open Sans", sans-serif; white-space: nowrap; }

/* Terminal */
.terminal { display: flex; height: 139px; margin-top: 4px; }
.side { display: flex; flex-direction: column; width: 16px; padding: 0 2px 2px 1px; }
.side button { height: 14px; padding-top: 2px; line-height: 0; }
.side svg { width: 7px; height: 7px; }
.caption { display: flex; flex: 1; align-items: flex-end; justify-content: center; background: linear-gradient(#bcd2ec, #98b4d8); }
.caption span { writing-mode: vertical-rl; transform: rotate(180deg); font-size: 10px; line-height: 13px; }
.pane { flex: 1; min-width: 0; padding-right: 4px; }
.grid-wrap { display: flex; height: 117px; border-top: 1px solid #a0a0a0; border-bottom: 1px solid #000; background: #fff; }
table { flex: 1; height: 105px; table-layout: fixed; border-collapse: collapse; }
.w-order { width: 109px; }
.w-time { width: 187px; }
.w-std { width: 85px; }
.w-vol { width: 68px; }
.w-last { width: 97px; }
th { height: 25px; padding: 0 5px; border-right: 1px solid #dcdcdc; border-bottom: 1px solid #c4c4c4; background: linear-gradient(#fff 50%, #f2f4f6); font-weight: 400; text-align: right; }
th:first-child { padding-left: 6px; text-align: left; }
.sort { width: 6px; height: 8px; margin-left: 6px; }
td { height: 20px; padding: 0 3px; border-right: 1px solid #c6c6c6; border-bottom: 1px solid #c6c6c6; text-align: right; white-space: nowrap; }
td:first-child { text-align: left; }
td:last-child { padding-right: 4px; border-right: 0; }
th:last-child { padding-right: 6px; border-right: 0; }
td svg { width: 16px; height: 16px; margin-right: 6px; vertical-align: middle; }
tbody tr:nth-child(odd) { background: #eaeaea; }
.tp { background: #62f062; }
.sl { background: #ffa0a0; }
tfoot td { border: 0; background: #c6c6c6; font-size: 10px; font-weight: bold; }
tfoot i { display: inline-block; width: 22px; padding-left: 4px; color: #888; font-style: normal; font-weight: 400; }
.scroll { display: flex; flex-direction: column; align-items: center; width: 17px; padding: 8px 0 7px; background: #f2f2f2; }
.scroll svg { width: 7px; height: 4px; fill: #444; }
.thumb { width: 15px; height: 14px; margin: auto 0 8px; border: 1px solid #909090; background: linear-gradient(90deg, #f4f4f4, #d0d0d0); }
.tabs { display: grid; grid-template-columns: 69px 97px 63px 58px 102px 63px 71px 71px 59px; height: 18px; color: #707070; }
.tabs button { white-space: nowrap; }
.tabs button:nth-child(n+3) { background: linear-gradient(#606060, #606060) 100% 4px / 1px 12px no-repeat; }
.tabs .active { margin-top: -1px; border: 1px solid #000; border-top: 0; background: #fff; color: #000; }

/* Status */
.status { position: relative; display: grid; grid-template-columns: 554px 116px 102px 71px 72px 68px 70px 66px 1fr; height: 23px; padding: 4px 0 2px; border-top: 1px solid #a0a0a0; box-shadow: inset 0 1px #fff; }
.status span { padding: 1px 0 0 5px; border-left: 1px solid #a0a0a0; }
.status span:first-child { padding-left: 2px; border: 0; }
.status .traffic { display: flex; align-items: center; gap: 35px; }
.traffic svg { width: 24px; height: 12px; }
.resize { position: absolute; right: 0; bottom: 0; width: 16px; height: 16px; }
.taskbar { display: flex; gap: 4px; height: 7px; padding-left: 162px; border-top: 1px solid #333; background: linear-gradient(90deg, #4a4d50, #555 65%, #70767c 75%, #4c5054); }
.task { width: 156px; border: 1px solid #222; border-bottom: 0; border-radius: 3px 3px 0 0; background: #8a8a8a; box-shadow: inset 0 1px #bbb; }
.task.current { background: #2c2c30; box-shadow: inset 0 1px #555; }
.tray { width: 130px; height: 6px; margin-left: auto; margin-right: 47px; }
.orb { position: absolute; left: 9px; bottom: 0; width: 40px; height: 12px; }

.pen { position: absolute; z-index: 2; top: 0; left: 0; width: 100%; fill: none; stroke: #ed1c24; stroke-width: 5; stroke-linejoin: round; stroke-linecap: round; pointer-events: none; }
```
